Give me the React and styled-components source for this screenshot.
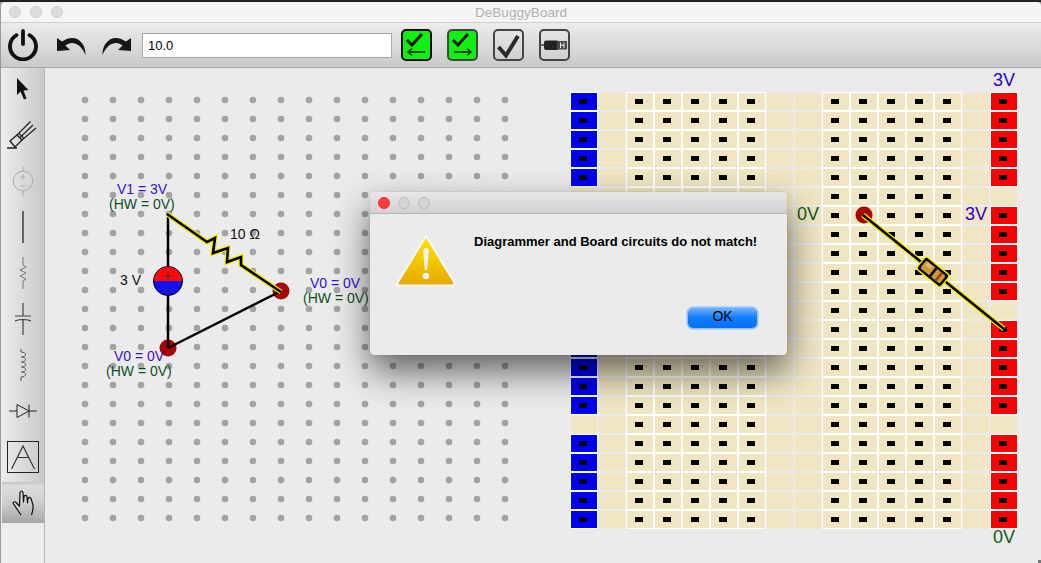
import React from 'react';
import styled, { createGlobalStyle } from 'styled-components';

const GlobalStyle = createGlobalStyle`
  html, body { margin: 0; padding: 0; width: 1041px; height: 563px; overflow: hidden; background: #2b2b2b; }
  * { box-sizing: border-box; }
`;

const BLANK_RAIL_ROWS = [5, 11, 17];
const ROWS = Array.from({ length: 23 }, (_, i) => i);
const COLS = Array.from({ length: 16 }, (_, i) => i);
const DOT_COLS = Array.from({ length: 16 }, (_, i) => 85 + i * 28);
const RESISTOR_PATH = '167,214 207,242 215,238 213,253 228,248 227,262 241,257 241,265 281,292';

function cellKind(row, col) {
  if (col === 0 || col === 15) {
    if (BLANK_RAIL_ROWS.includes(row)) return 'blank';
    return col === 0 ? 'blue' : 'red';
  }
  if ((col >= 2 && col <= 6) || (col >= 9 && col <= 13)) return 'hole';
  return 'blank';
}

export default function App() {
  return (
    <Window>
      <GlobalStyle />
      <TitleBar>
        <Lights>
          <Light /><Light /><Light />
        </Lights>
        <WindowTitle>DeBuggyBoard</WindowTitle>
      </TitleBar>
      <Toolbar>
        <ToolIcon $w={30} $h={32} viewBox="0 0 30 32">
          <path d="M8.5 6.2 A13 13 0 1 0 21.5 6.2" fill="none" stroke="#111" strokeWidth="3.8" strokeLinecap="round" />
          <line x1="15" y1="2" x2="15" y2="15" stroke="#111" strokeWidth="3.8" strokeLinecap="round" />
        </ToolIcon>
        <ToolIcon $w={30} $h={22} $ml={18} viewBox="0 0 30 22">
          <path d="M1 4 L1 17 L14 16 L9.5 11.5 C15 7 24 8 29.5 21 C30 9 20 -2 6 7.5 Z" fill="#161616" />
        </ToolIcon>
        <ToolIcon $w={30} $h={22} $ml={16} viewBox="0 0 30 22">
          <path d="M29 4 L29 17 L16 16 L20.5 11.5 C15 7 6 8 0.5 21 C0 9 10 -2 24 7.5 Z" fill="#161616" />
        </ToolIcon>
        <ValueInput readOnly value="10.0" />
        <CheckRow>
          <CheckButton $on $dark>
            <svg width="27" height="28" viewBox="0 0 27 28">
              <path d="M4 9 L9 14 L19 3" fill="none" stroke="#1a1a1a" strokeWidth="3" />
              <path d="M22 21 H5 M9 17.5 L5 21 L9 24.5" fill="none" stroke="#1a1a1a" strokeWidth="1.3" />
            </svg>
          </CheckButton>
          <CheckButton $on>
            <svg width="27" height="28" viewBox="0 0 27 28">
              <path d="M4 9 L9 14 L19 3" fill="none" stroke="#1a1a1a" strokeWidth="3" />
              <path d="M5 21 H22 M18 17.5 L22 21 L18 24.5" fill="none" stroke="#1a1a1a" strokeWidth="1.3" />
            </svg>
          </CheckButton>
          <CheckButton>
            <svg width="27" height="28" viewBox="0 0 27 28">
              <path d="M3.5 16 L11 24.5 L23 5" fill="none" stroke="#2a2a2a" strokeWidth="4" />
            </svg>
          </CheckButton>
          <CheckButton>
            <svg width="27" height="28" viewBox="0 0 27 28">
              <rect x="0" y="13.3" width="4" height="1.4" fill="#333" />
              <rect x="3" y="9.5" width="15" height="9.5" rx="2" fill="#222" />
              <rect x="16" y="10" width="10" height="8.5" fill="#4a4a4a" />
              <path d="M19.5 11.5 V17 M23 11.5 V17 M19.5 14.2 H23" fill="none" stroke="#eee" strokeWidth="1" />
            </svg>
          </CheckButton>
        </CheckRow>
      </Toolbar>
      <Body>
        <Palette>
          <PaletteList>
            <PaletteItem>
              <svg width="13" height="22" viewBox="0 0 13 22">
                <path d="M1 0 V17 L4.5 13.5 L8 21.5 L10.5 20.5 L7.5 12.5 L12.5 12 Z" fill="#111" />
              </svg>
            </PaletteItem>
            <PaletteItem>
              <svg width="32" height="28" viewBox="0 0 32 28" fill="none" stroke="#222" strokeWidth="1.2">
                <path d="M0 27 H10 M3 20 L10 14 L15 19 L8 26 Z" strokeWidth="1.4" />
                <path d="M10 14 L23.5 0.5 M13 16.5 L26 4 M15 19 L29 7 M11.5 12 L17 17.5" />
              </svg>
            </PaletteItem>
            <PaletteItem>
              <svg width="22" height="30" viewBox="0 0 22 30" fill="none" stroke="#aaa" strokeWidth="1">
                <circle cx="11" cy="15" r="9.8" />
                <path d="M11 0 V5 M11 25 V30 M8.5 11 H13.5 M11 8.5 V13.5 M8.5 20 H13.5" />
              </svg>
            </PaletteItem>
            <PaletteItem>
              <svg width="4" height="34" viewBox="0 0 4 34">
                <line x1="2" y1="1" x2="2" y2="33" stroke="#222" strokeWidth="1.3" />
              </svg>
            </PaletteItem>
            <PaletteItem>
              <svg width="10" height="32" viewBox="0 0 10 32" fill="none" stroke="#777" strokeWidth="1">
                <path d="M5 0 V8 L8 10 L2 13 L8 16 L2 19 L8 22 L5 24 V32" />
              </svg>
            </PaletteItem>
            <PaletteItem>
              <svg width="16" height="32" viewBox="0 0 16 32" fill="none" stroke="#444" strokeWidth="1.2">
                <path d="M8 0 V13 M0 13 H16 M0 18 Q8 15 16 18 M8 17 V32" />
              </svg>
            </PaletteItem>
            <PaletteItem>
              <svg width="8" height="32" viewBox="0 0 8 32" fill="none" stroke="#555" strokeWidth="1">
                <path d="M2 0 V3 C8 3 8 8 2.5 8 C8 8 8 13 2.5 13 C8 13 8 18 2.5 18 C8 18 8 23 2.5 23 C8 23 8 28 2 28 V32" />
              </svg>
            </PaletteItem>
            <PaletteItem>
              <svg width="28" height="16" viewBox="0 0 28 16" fill="none" stroke="#222" strokeWidth="1">
                <path d="M0 8 H8 M8 1.5 V14.5 L20 8 Z M20 1.5 V14.5 M20 8 H28" />
              </svg>
            </PaletteItem>
            <PaletteItem>
              <TextTool>
                <svg width="24" height="24" viewBox="0 0 24 24" fill="none" stroke="#333" strokeWidth="1.2">
                  <path d="M0.5 24 L12 1 L23.5 24 M6 12.5 H18" />
                </svg>
              </TextTool>
            </PaletteItem>
            <PaletteItem $selected>
              <svg width="23" height="26" viewBox="0 0 23 26" fill="none" stroke="#111" strokeWidth="1.2" strokeLinejoin="round">
                <path d="M9 25 L1.5 14 C0.5 12 2.5 11 4 12.5 L7.5 16 L8 2.5 C8.5 0.5 10.5 0.5 11 2.5 L11.5 12 L12 6.5 C12.5 5 14.5 5 15 6.5 L15.5 13 L16 8.5 C16.5 7 18.5 7 19 8.5 L21 15 C21.5 19 20.5 22 19.5 25" />
              </svg>
            </PaletteItem>
          </PaletteList>
        </Palette>
        <Canvas>
          <Diagram viewBox="45 68 520 495" width="520" height="495">
            {ROWS.map((r) =>
              DOT_COLS.map((x) => (
                <circle key={`${r}-${x}`} cx={x} cy={100 + r * 19} r="3.3" fill="#a3a3a3" />
              ))
            )}
            <circle cx="281" cy="291" r="8.5" fill="#a80505" />
            <circle cx="168" cy="348" r="8.5" fill="#a80505" />
            <line x1="168" y1="214" x2="168" y2="348" stroke="#000" strokeWidth="2.5" />
            <line x1="168" y1="348" x2="281" y2="291" stroke="#000" strokeWidth="2.5" />
            <polyline points={RESISTOR_PATH} fill="none" stroke="#f6ee00" strokeWidth="5" />
            <polyline points={RESISTOR_PATH} fill="none" stroke="#000" strokeWidth="2.6" />
            <circle cx="168" cy="281" r="14.5" fill="#1010f0" stroke="#000" strokeWidth="1" />
            <path d="M154 281 A14 14 0 0 1 182 281 Z" fill="#fb0a0a" />
            <path d="M168 272 V280 M164 276 H172 M164 290 H172" stroke="#333" strokeWidth="0.8" />
            <VoltText x="117" y="194">V1 = 3V</VoltText>
            <HwText x="109" y="209">(HW = 0V)</HwText>
            <VoltText x="114" y="361">V0 = 0V</VoltText>
            <HwText x="106" y="376">(HW = 0V)</HwText>
            <VoltText x="310" y="288">V0 = 0V</VoltText>
            <HwText x="303" y="303">(HW = 0V)</HwText>
            <ValueText x="120" y="285">3 V</ValueText>
            <ValueText x="230" y="239">10 Ω</ValueText>
          </Diagram>
          <Board>
            <EdgeLabel $h={25} $color="#2a00c4">3V</EdgeLabel>
            <BoardGrid>
              {ROWS.map((r) =>
                COLS.map((c) => {
                  const kind = cellKind(r, c);
                  return (
                    <Cell key={`${r}-${c}`} $kind={kind}>
                      {kind !== 'blank' && <Pin />}
                    </Cell>
                  );
                })
              )}
            </BoardGrid>
            <EdgeLabel $h={18} $color="#0a5a14">0V</EdgeLabel>
            <BoardOverlay viewBox="0 0 446 495" width="446" height="495">
              <circle cx="293" cy="147" r="8.5" fill="#a80505" />
              <line x1="292" y1="147" x2="433" y2="261" stroke="#f6ee00" strokeWidth="5" />
              <line x1="292" y1="147" x2="433" y2="261" stroke="#000" strokeWidth="2.6" />
              <g transform="translate(362 204) rotate(39)">
                <rect x="-15.5" y="-8" width="31" height="16" rx="3" fill="#000" stroke="#f6ee00" strokeWidth="1.4" />
                <rect x="-12.5" y="-5" width="25" height="10" rx="2" fill="#cf9b3e" />
                <rect x="-10" y="-4" width="6" height="3.5" fill="#e4bb6a" />
                <rect x="-1" y="-5" width="2.6" height="10" fill="#000" />
                <rect x="6" y="-5" width="2.8" height="10" fill="#8a4a10" />
              </g>
            </BoardOverlay>
            <BoardLabel $x={226} $y={136} $color="#0a5a14">0V</BoardLabel>
            <BoardLabel $x={394} $y={136} $color="#2a00c4">3V</BoardLabel>
          </Board>
        </Canvas>
      </Body>
      <DialogLayer>
        <Dialog>
          <DialogTitleBar>
            <DialogLight $close /><DialogLight /><DialogLight />
          </DialogTitleBar>
          <DialogBody>
            <svg width="60" height="54" viewBox="0 0 60 54">
              <defs>
                <linearGradient id="warn" x1="0" y1="0" x2="0" y2="1">
                  <stop offset="0" stopColor="#ffe600" />
                  <stop offset="1" stopColor="#e8a800" />
                </linearGradient>
              </defs>
              <path d="M29 2 L57 48 Q58.5 51.5 55 51.5 L3 51.5 Q-0.5 51.5 1 48 Z" fill="url(#warn)" stroke="#f8f8f8" strokeWidth="2" strokeLinejoin="round" />
              <path d="M26 16 Q29 12 32 16 L30.2 36 H27.8 Z" fill="#f0f0f0" />
              <circle cx="29" cy="42" r="3.3" fill="#f0f0f0" />
            </svg>
            <DialogMessage>Diagrammer and Board circuits do not match!</DialogMessage>
            <OkButton>OK</OkButton>
          </DialogBody>
        </Dialog>
      </DialogLayer>
      <ResizeGrip />
    </Window>
  );
}

const Window = styled.div`
  position: relative;
  width: 1041px;
  height: 563px;
  padding-top: 2px;
  background: linear-gradient(#222 2px, #9a9a9a 2px);
  font-family: "Liberation Sans", Arial, sans-serif;
`;

const TitleBar = styled.div`
  position: relative;
  height: 21px;
  margin-left: 1px;
  display: flex;
  align-items: center;
  background: #f5f5f5;
  border-bottom: 1px solid #cfcfcf;
  border-radius: 4px 4px 0 0;
`;

const Lights = styled.div`
  display: flex;
  gap: 9px;
  padding-left: 8px;
`;

const Light = styled.span`
  width: 12px;
  height: 12px;
  border-radius: 50%;
  background: #dcdcdc;
  border: 1px solid #d0d0d0;
`;

const WindowTitle = styled.div`
  position: absolute;
  left: 0;
  right: 0;
  text-align: center;
  font-size: 13.6px;
  color: #b0b0b0;
`;

const Toolbar = styled.div`
  height: 45px;
  margin-left: 1px;
  display: flex;
  align-items: center;
  padding-left: 7px;
  background: linear-gradient(#ececec, #c9c9c9);
  border-bottom: 1px solid #a9a9a9;
`;

const ToolIcon = styled.svg`
  width: ${(p) => p.$w}px;
  height: ${(p) => p.$h}px;
  margin-left: ${(p) => p.$ml || 0}px;
  flex: none;
`;

const ValueInput = styled.input`
  width: 250px;
  height: 25px;
  margin-left: 10px;
  padding: 0 5px;
  border: 1px solid #a8a8a8;
  background: #fff;
  font: 13px "Liberation Sans", Arial, sans-serif;
  color: #000;
  outline: none;
`;

const CheckRow = styled.div`
  display: flex;
  gap: 15px;
  margin-left: 9px;
`;

const CheckButton = styled.div`
  width: 31px;
  height: 32px;
  border-radius: 5px;
  display: flex;
  align-items: center;
  justify-content: center;
  border: 2px solid ${(p) => (p.$dark ? '#0a0a0a' : '#444')};
  background: ${(p) => (p.$on ? '#0ef00e' : 'transparent')};
`;

const Body = styled.div`
  display: flex;
  height: 495px;
  margin-left: 1px;
`;

const Palette = styled.div`
  width: 44px;
  flex: none;
  background: #ededed;
  border-right: 1px solid #b5b5b5;
`;

const PaletteList = styled.div`
  display: flex;
  flex-direction: column;
  gap: 5px;
  background: linear-gradient(90deg, #ededed, #c9c9c9);
`;

const PaletteItem = styled.div`
  height: 41px;
  display: flex;
  align-items: center;
  justify-content: center;
  ${(p) => p.$selected && 'margin-left: 1px; background: linear-gradient(#c4c4c4 0%, #dcdcdc 10%, #cfcfcf 50%, #a5a5a5 100%);'}
`;

const TextTool = styled.div`
  width: 32px;
  height: 32px;
  display: flex;
  align-items: center;
  justify-content: center;
  border: 1.5px solid #222;
`;

const Canvas = styled.div`
  flex: 1;
  display: flex;
  background: #ebebeb;
`;

const Diagram = styled.svg`
  flex: none;
  display: block;
  margin-right: 6px;
`;

const VoltText = styled.text`
  font: 14px "Liberation Sans", Arial, sans-serif;
  fill: #3a10c8;
`;

const HwText = styled.text`
  font: 14px "Liberation Sans", Arial, sans-serif;
  fill: #0e4f1e;
`;

const ValueText = styled.text`
  font: 14px "Liberation Sans", Arial, sans-serif;
  fill: #111;
`;

const Board = styled.div`
  position: relative;
  width: 446px;
  flex: none;
  display: flex;
  flex-direction: column;
`;

const EdgeLabel = styled.div`
  height: ${(p) => p.$h}px;
  line-height: ${(p) => p.$h}px;
  padding-right: 2px;
  text-align: right;
  font-size: 18px;
  color: ${(p) => p.$color};
`;

const BoardGrid = styled.div`
  display: grid;
  grid-template-columns: repeat(16, 26px);
  grid-auto-rows: 17px;
  gap: 2px;
  width: 446px;
`;

const kindColor = { blue: '#0000f6', red: '#fc0000', hole: '#f0e6c3', blank: '#f0e6c3' };

const Cell = styled.div`
  display: flex;
  align-items: center;
  justify-content: center;
  background: ${(p) => kindColor[p.$kind]};
  ${(p) => p.$kind !== 'blank' && 'outline: 1px solid #fff;'}
`;

const Pin = styled.span`
  width: 8px;
  height: 5px;
  margin-right: 2px;
  background: #000;
`;

const BoardOverlay = styled.svg`
  position: absolute;
  left: 0;
  top: 0;
  overflow: visible;
`;

const BoardLabel = styled.div`
  position: absolute;
  left: ${(p) => p.$x}px;
  top: ${(p) => p.$y}px;
  font-size: 18px;
  line-height: 20px;
  color: ${(p) => p.$color};
`;

const DialogLayer = styled.div`
  position: absolute;
  left: 370px;
  top: 192px;
`;

const Dialog = styled.div`
  width: 417px;
  height: 163px;
  border-radius: 4px;
  overflow: hidden;
  background: #ebebeb;
  box-shadow: 0 0 1px rgba(0,0,0,.4), 0 16px 36px rgba(0,0,0,.6);
`;

const DialogTitleBar = styled.div`
  height: 22px;
  display: flex;
  align-items: center;
  gap: 8px;
  padding-left: 8px;
  background: linear-gradient(#e8e6e8, #d2d0d2);
  border-bottom: 1px solid #b4b4b4;
`;

const DialogLight = styled.span`
  width: 12px;
  height: 12px;
  border-radius: 50%;
  background: ${(p) => (p.$close ? '#fc3b3b' : '#d6d4d6')};
  border: 1px solid ${(p) => (p.$close ? '#e83030' : '#bcbcbc')};
`;

const DialogBody = styled.div`
  position: relative;
  height: 141px;
  display: flex;
  align-items: flex-start;
  padding: 20px 0 0 27px;
`;

const DialogMessage = styled.div`
  margin-left: 17px;
  font-size: 13px;
  font-weight: bold;
  color: #000;
  line-height: 15px;
`;

const OkButton = styled.div`
  position: absolute;
  right: 30px;
  bottom: 27px;
  width: 69px;
  height: 20px;
  border-radius: 5px;
  text-align: center;
  font-size: 14px;
  line-height: 17px;
  color: #000;
  background: linear-gradient(#6fb2ff, #0d7dfd 50%, #0a6ef5);
  box-shadow: 0 0 0 1.5px #8fc1f8;
`;

const ResizeGrip = styled.div`
  position: absolute;
  right: 0;
  bottom: 0;
  width: 3px;
  height: 3px;
  background: #777;
`;
